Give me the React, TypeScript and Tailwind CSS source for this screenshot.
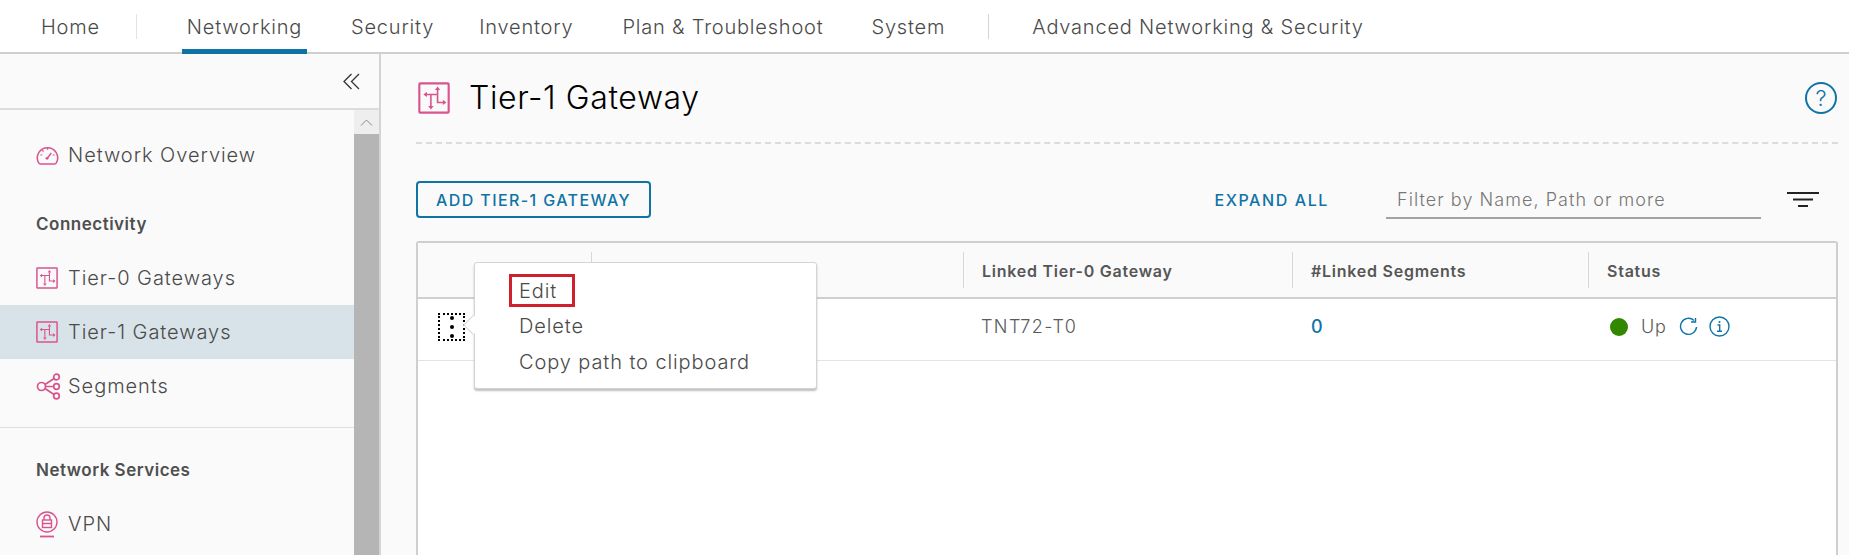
const pink = "#d9548f";

function GatewayIcon({ className }: { className: string }) {
  return (
    <svg className={className} viewBox="0 0 36 36" fill="none" stroke={pink}>
      <rect x="1.500" y="1.500" width="33" height="33" rx="1" strokeWidth="2.400" />
      <path d="M9 14h13M14.500 14v13M22 9v14h7" strokeWidth="1.800" />
      <g fill={pink} stroke="none">
        <path d="M6 14l4-3v6zM14.500 31l-3-4h6zM22 5l3 4h-6zM32 23l-4-3v6z" />
      </g>
    </svg>
  );
}

function GaugeIcon() {
  return (
    <svg className="h-[22px] w-[23px]" viewBox="0 0 24 22" fill="none" stroke={pink} strokeWidth="1.600">
      <path d="M5 20.500h14c1.500 0 2-.6 2.600-2A10.600 10.600 0 1 0 2.400 18.500c.6 1.400 1.100 2 2.600 2z" />
      <path d="M12 3v2.500M4.500 11h2M17.500 11h2M6.500 6l1.400 1.400" strokeWidth="1.300" />
      <path d="M12 14l4-5" />
      <circle cx="11.500" cy="14.500" r="1.500" fill={pink} stroke="none" />
    </svg>
  );
}

function SegmentsIcon() {
  return (
    <svg className="h-[27px] w-[25px]" viewBox="0 0 25 27" fill="none" stroke={pink} strokeWidth="1.700">
      <circle cx="5.500" cy="13.500" r="4" />
      <circle cx="20.500" cy="4" r="2.800" />
      <circle cx="20.500" cy="13.500" r="2.800" />
      <circle cx="20.500" cy="23" r="2.800" />
      <path d="M9 11.500l9-6M9.500 13.500h8M9 15.500l9 6" />
    </svg>
  );
}

function VpnIcon() {
  return (
    <svg className="h-[28px] w-[22px]" viewBox="0 0 22 28" fill="none" stroke={pink} strokeWidth="1.400">
      <circle cx="11" cy="12" r="10" />
      <rect x="6.500" y="10" width="9" height="7.500" />
      <path d="M8 10V8a3 3 0 0 1 6 0v2M6.500 13.500h9" />
      <path d="M4 26.500h14" strokeWidth="1.800" />
    </svg>
  );
}

function NavItem({ label, icon, active }: { label: string; icon: React.ReactNode; active?: boolean }) {
  return (
    <div className={`flex h-[54px] items-center pl-[36px] text-[20px] font-light tracking-[0.95px] text-[#4a4a4a] ${active ? "bg-[#d8e3e9]" : ""}`}>
      <div className="flex w-[32px] items-center">{icon}</div>
      <span>{label}</span>
    </div>
  );
}

function NavHeading({ label }: { label: string }) {
  return <div className="flex h-[40px] items-center pt-[3px] pl-[36px] text-[17px] font-semibold tracking-[0.5px] text-[#4f4f4f]">{label}</div>;
}

function HeaderCell({ label, className }: { label?: string; className?: string }) {
  return (
    <div className={`flex items-center ${className ?? ""}`}>
      <div className="h-[36px] w-px bg-[#d7d7d7]" />
      {label && <span className="pt-[1px] pl-[18px] text-[16px] font-semibold tracking-[0.75px] text-[#565656]">{label}</span>}
    </div>
  );
}

export default function App() {
  return (
    <div className="flex h-[555px] flex-col overflow-hidden bg-[#fafafa] font-['Inter','Open_Sans',sans-serif]">
      <header className="flex h-[54px] shrink-0 items-stretch border-b-2 border-[#cfcfcf] bg-white text-[20px] font-light tracking-[0.8px] text-[#4a4a4a]">
        <div className="flex w-[136px] items-center pt-[2px] pl-[41px]">Home</div>
        <div className="my-auto h-[25px] w-px bg-[#e3e3e3]" />
        <div className="relative ml-[45px] flex w-[125px] items-center justify-center pt-[2px]">
          Networking
          <div className="absolute -bottom-[2px] left-0 h-[5px] w-full bg-[#0f74a5]" />
        </div>
        <div className="ml-[44px] flex items-center pt-[2px]">Security</div>
        <div className="ml-[45px] flex items-center pt-[2px]">Inventory</div>
        <div className="ml-[49px] flex items-center pt-[2px]">Plan &amp; Troubleshoot</div>
        <div className="ml-[48px] flex items-center pt-[2px]">System</div>
        <div className="my-auto ml-[43px] h-[25px] w-px bg-[#d5d5d5]" />
        <div className="ml-[43px] flex items-center pt-[2px]">Advanced Networking &amp; Security</div>
      </header>

      <div className="flex min-h-0 flex-1">
        <aside className="flex w-[381px] shrink-0 flex-col border-r-2 border-[#d4d4d4]">
          <div className="flex h-[56px] shrink-0 items-center justify-end border-b-2 border-[#dcdcdc] pr-[19px]">
            <svg className="h-[17px] w-[17px]" viewBox="0 0 17 17" fill="none" stroke="#333" strokeWidth="1.300">
              <path d="M8.500 1L1 8.500 8.500 16M16 1L8.500 8.500 16 16" />
            </svg>
          </div>
          <div className="flex min-h-0 flex-1">
            <nav className="min-w-0 flex-1 pt-[18px]">
              <NavItem label="Network Overview" icon={<GaugeIcon />} />
              <div className="mt-[21px] mb-[8px]">
                <NavHeading label="Connectivity" />
              </div>
              <NavItem label="Tier-0 Gateways" icon={<GatewayIcon className="h-[24px] w-[22px]" />} />
              <NavItem label="Tier-1 Gateways" active icon={<GatewayIcon className="h-[24px] w-[22px]" />} />
              <NavItem label="Segments" icon={<SegmentsIcon />} />
              <div className="mt-[14px] h-px bg-[#dedede]" />
              <div className="mt-[21px] mb-[8px]">
                <NavHeading label="Network Services" />
              </div>
              <NavItem label="VPN" icon={<VpnIcon />} />
            </nav>
            <div className="flex w-[25px] shrink-0 flex-col bg-[#b5b5b5]">
              <div className="flex h-[24px] items-center justify-center bg-[#eeeeee]">
                <svg className="h-[7px] w-[13px]" viewBox="0 0 13 7" fill="none" stroke="#8a8a8a" strokeWidth="1">
                  <path d="M1 6.500L6.500 1 12 6.500" />
                </svg>
              </div>
            </div>
          </div>
        </aside>

        <main className="flex min-w-0 flex-1 flex-col pr-[11px] pl-[35px]">
          <div className="flex h-[90px] shrink-0 items-center border-b-2 border-dashed border-[#dcdcdc] pl-[2px]">
            <GatewayIcon className="h-[32px] w-[32px]" />
            <h1 className="ml-[19px] text-[32px] font-light tracking-[0.6px] text-black">Tier-1 Gateway</h1>
            <div className="mr-px ml-auto flex h-[32px] w-[32px] items-center justify-center rounded-full border-2 border-[#0f74a5] text-[22px] font-light text-[#0f74a5]">
              ?
            </div>
          </div>

          <div className="mt-[37px] mb-[23px] flex h-[37px] shrink-0 items-center">
            <button className="flex h-[37px] w-[235px] items-center justify-center rounded-[4px] border-2 border-[#0f74a5] text-[16px] font-medium tracking-[1.400px] text-[#0f74a5]">
              ADD TIER-1 GATEWAY
            </button>
            <span className="ml-auto text-[16px] font-medium tracking-[1.600px] text-[#0f74a5]">EXPAND ALL</span>
            <div className="ml-[57px] flex h-[38px] w-[375px] items-center border-b-2 border-[#a3a3a3] pt-[2px] pl-[11px] text-[18px] font-light tracking-[1.050px] text-[#777777]">
              Filter by Name, Path or more
            </div>
            <svg className="mr-[19px] ml-[26px] h-[15px] w-[32px]" viewBox="0 0 32 15" stroke="#222" strokeWidth="2">
              <path d="M0 1h32M6 7.500h20M11 14h10" />
            </svg>
          </div>

          <div className="relative min-h-0 flex-1 rounded-t-[3px] border-x-2 border-t-2 border-[#cfcfcf] bg-white">
            <div className="grid h-[56px] grid-cols-[173px_372px_329px_296px_1fr] border-b-2 border-[#cfcfcf] bg-[#fafafa]">
              <div />
              <HeaderCell />
              <HeaderCell label="Linked Tier-0 Gateway" />
              <HeaderCell label="#Linked Segments" />
              <HeaderCell label="Status" />
            </div>
            <div className="grid h-[62px] grid-cols-[173px_372px_329px_296px_1fr] border-b border-[#e3e3e3] pb-[6px] text-[18px] font-light text-[#5a5a5a]">
              <div className="flex items-center pl-[20px]">
                <div className="flex h-[28px] w-[27px] flex-col items-center justify-between border-2 border-dotted border-black py-[1px]">
                  <div className="h-[4px] w-[4px] rounded-full bg-black" />
                  <div className="h-[4px] w-[4px] rounded-full bg-black" />
                  <div className="h-[4px] w-[4px] rounded-full bg-black" />
                </div>
              </div>
              <div />
              <div className="flex items-center pl-[18px] tracking-[1.400px]">TNT72-T0</div>
              <div className="flex items-center pl-[19px] font-medium text-[#0f74a5]">0</div>
              <div className="flex items-center pl-[22px]">
                <div className="h-[18px] w-[18px] rounded-full bg-[#318700]" />
                <span className="ml-[13px] tracking-[0.8px]">Up</span>
                <svg className="ml-[12px] h-[19px] w-[19px]" viewBox="0 0 19 19" fill="none" stroke="#0f74a5" strokeWidth="1.400">
                  <path d="M15 3.500A8 8 0 1 0 17.500 10M16.500 1v4h-4.500" />
                </svg>
                <svg className="ml-[11px] h-[21px] w-[21px]" viewBox="0 0 21 21" fill="none" stroke="#0f74a5" strokeWidth="1.400">
                  <circle cx="10.500" cy="10.500" r="9.500" />
                  <path d="M8.500 9h2.200v6M8 15.200h5" />
                  <circle cx="10.500" cy="6" r="1" fill="#0f74a5" stroke="none" />
                </svg>
              </div>
            </div>

            <div className="absolute top-[19px] left-[56px] flex h-[127px] w-[343px] flex-col rounded-[3px] border border-[#d4d4d4] bg-white pt-[11px] pl-[44px] text-[20px] font-light tracking-[0.9px] text-[#4a4a4a] shadow-[0_2px_2px_rgba(0,0,0,0.25)]">
              <div className="absolute top-[55px] -left-[9px] h-[14px] w-[14px] rotate-45 border-b border-l border-[#d8d8d8] bg-white" />
              <div className="-ml-[10px] flex h-[33px] w-[66px] items-center border-[3px] border-[#d0202e] pl-[7px]">Edit</div>
              <div className="flex h-[37px] items-center">Delete</div>
              <div className="flex h-[36px] items-center">Copy path to clipboard</div>
            </div>
          </div>
        </main>
      </div>
    </div>
  );
}
